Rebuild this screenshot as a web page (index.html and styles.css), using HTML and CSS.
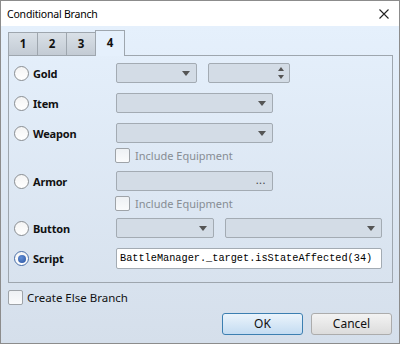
FILE: index.html
```html
<!DOCTYPE html>
<html lang="en">
<head>
  <meta charset="UTF-8">
  <title>Conditional Branch</title>
  <link rel="stylesheet" href="styles.css">
</head>
<body>
  <div class="window">
    <div class="titlebar">
      <span class="title">Conditional Branch</span>
      <svg class="close" width="10" height="10" viewBox="0 0 10 10"><path d="M0.5 0.5 L9.5 9.5 M9.5 0.5 L0.5 9.5" stroke="#222" stroke-width="1.1" fill="none"/></svg>
    </div>
    <div class="client">
      <div class="tabs">
        <div class="tab">1</div>
        <div class="tab">2</div>
        <div class="tab">3</div>
        <div class="tab active">4</div>
      </div>
      <div class="panel">
        <div class="row">
          <label class="radio"><span class="dot"></span>Gold</label>
          <div class="combo w80"><span class="arrow"></span></div>
          <div class="spin"><span class="up"></span><span class="down"></span></div>
        </div>
        <div class="row">
          <label class="radio"><span class="dot"></span>Item</label>
          <div class="combo w156"><span class="arrow"></span></div>
        </div>
        <div class="row">
          <label class="radio"><span class="dot"></span>Weapon</label>
          <div class="combo w156"><span class="arrow"></span></div>
        </div>
        <div class="subrow first">
          <span class="check"></span><span class="dim">Include Equipment</span>
        </div>
        <div class="row">
          <label class="radio"><span class="dot"></span>Armor</label>
          <div class="combo w156"><span class="dots">...</span></div>
        </div>
        <div class="subrow second">
          <span class="check"></span><span class="dim">Include Equipment</span>
        </div>
        <div class="row">
          <label class="radio"><span class="dot"></span>Button</label>
          <div class="combo w97"><span class="arrow"></span></div>
          <div class="combo w156 gap"><span class="arrow"></span></div>
        </div>
        <div class="row script">
          <label class="radio"><span class="dot on"></span>Script</label>
          <div class="input">BattleManager._target.isStateAffected(34)</div>
        </div>
      </div>
      <div class="else">
        <span class="check"></span>Create Else Branch
      </div>
      <div class="buttons">
        <div class="btn ok">OK</div>
        <div class="btn">Cancel</div>
      </div>
    </div>
  </div>
</body>
</html>
```

FILE: styles.css
```css
body {
  margin: 0;
  font-family: "Noto Sans", "Open Sans", sans-serif;
  font-size: 11px;
  color: #111;
}
.window {
  width: 400px;
  height: 344px;
  box-sizing: border-box;
  border: 1px solid #8c8c8c;
  display: flex;
  flex-direction: column;
}
.titlebar {
  height: 25px;
  background: #fff;
  display: flex;
  align-items: center;
  justify-content: space-between;
  padding: 0 10px 0 6px;
}
.title {
  font-size: 10.5px;
  letter-spacing: -0.2px;
  color: #000;
}
.client {
  flex: 1;
  background: linear-gradient(#e5f0fc, #d5dfeb);
  padding: 4px 6px 0 7px;
}
.tabs {
  display: flex;
  align-items: flex-end;
  height: 25px;
}
.tab {
  width: 28px;
  height: 22px;
  border: 1px solid #9ea6ae;
  border-bottom: none;
  margin-right: -1px;
  background: linear-gradient(#d9e0e7, #c3cbd4);
  text-align: center;
  line-height: 22px;
  font-weight: bold;
  font-size: 11.5px;
}
.tab.active {
  height: 25px;
  line-height: 24px;
  background: #e5f0fc;
  position: relative;
  z-index: 1;
  margin-bottom: -1px;
}
.panel {
  height: 219px;
  border: 1px solid #9ea6ae;
  padding: 7px 0 0 0;
}
.row {
  display: flex;
  align-items: center;
  height: 20px;
  margin-bottom: 10px;
}
.radio {
  width: 107px;
  display: flex;
  align-items: center;
  font-weight: bold;
  font-size: 11px;
  letter-spacing: -0.2px;
}
.dot {
  width: 13px;
  height: 13px;
  border: 1px solid #8a8e92;
  border-radius: 50%;
  background: linear-gradient(#f4f4f4, #ffffff);
  margin: 0 4px 0 5px;
  box-sizing: content-box;
  display: inline-flex;
  align-items: center;
  justify-content: center;
}
.dot.on {
  border-color: #4a6fa8;
}
.dot.on::after {
  content: "";
  width: 8px;
  height: 8px;
  border-radius: 50%;
  background: radial-gradient(circle at 40% 35%, #5f8dd6, #2c55a0);
}
.combo, .spin, .input {
  height: 20px;
  box-sizing: border-box;
  border: 1px solid #a3abb3;
  border-radius: 2px;
  background: #d3dce6;
  position: relative;
}
.w80 { width: 81px; }
.w97 { width: 98px; }
.w156 { width: 157px; }
.gap { margin-left: 11px; }
.spin {
  width: 82px;
  margin-left: 11px;
}
.arrow {
  position: absolute;
  right: 6px;
  top: 7px;
  border-left: 4px solid transparent;
  border-right: 4px solid transparent;
  border-top: 5px solid #555;
}
.up, .down {
  position: absolute;
  right: 5px;
  border-left: 3px solid transparent;
  border-right: 3px solid transparent;
}
.up {
  top: 3px;
  border-bottom: 4px solid #555;
}
.down {
  bottom: 3px;
  border-top: 4px solid #555;
}
.dots {
  position: absolute;
  right: 6px;
  top: 0;
  line-height: 15px;
  font-size: 11px;
  color: #444;
  letter-spacing: 0.5px;
}
.subrow {
  display: flex;
  align-items: center;
  height: 14px;
  padding-left: 106px;
}
.subrow.first {
  margin: -5px 0 9px 0;
}
.subrow.second {
  margin: -5px 0 8px 0;
}
.check {
  width: 13px;
  height: 13px;
  border: 1px solid #9ea3a8;
  border-radius: 2px;
  background: linear-gradient(#eef1f4, #fafbfc);
  margin-right: 5px;
  display: inline-block;
}
.dim {
  color: #878d94;
  font-size: 11px;
}
.script {
  height: 21px;
}
.input {
  width: 266px;
  height: 21px;
  background: #fff;
  font-family: "Liberation Mono", "DejaVu Sans Mono", monospace;
  font-size: 10.25px;
  line-height: 19px;
  padding-left: 3px;
  color: #000;
}
.else {
  display: flex;
  align-items: center;
  margin-top: 7px;
  height: 15px;
  font-size: 11.5px;
}
.else .check {
  margin-right: 4px;
}
.buttons {
  display: flex;
  justify-content: flex-end;
  gap: 8px;
  margin-top: 8px;
  padding-right: 1px;
}
.btn {
  width: 81px;
  height: 22px;
  box-sizing: border-box;
  border: 1px solid #acacac;
  border-radius: 3px;
  background: linear-gradient(#f3f3f3, #dcdcdc);
  text-align: center;
  line-height: 20px;
  font-size: 12px;
}
.btn.ok {
  border-color: #3c7fb1;
  background: linear-gradient(#ebf4fc, #c4dcf2);
}
```
